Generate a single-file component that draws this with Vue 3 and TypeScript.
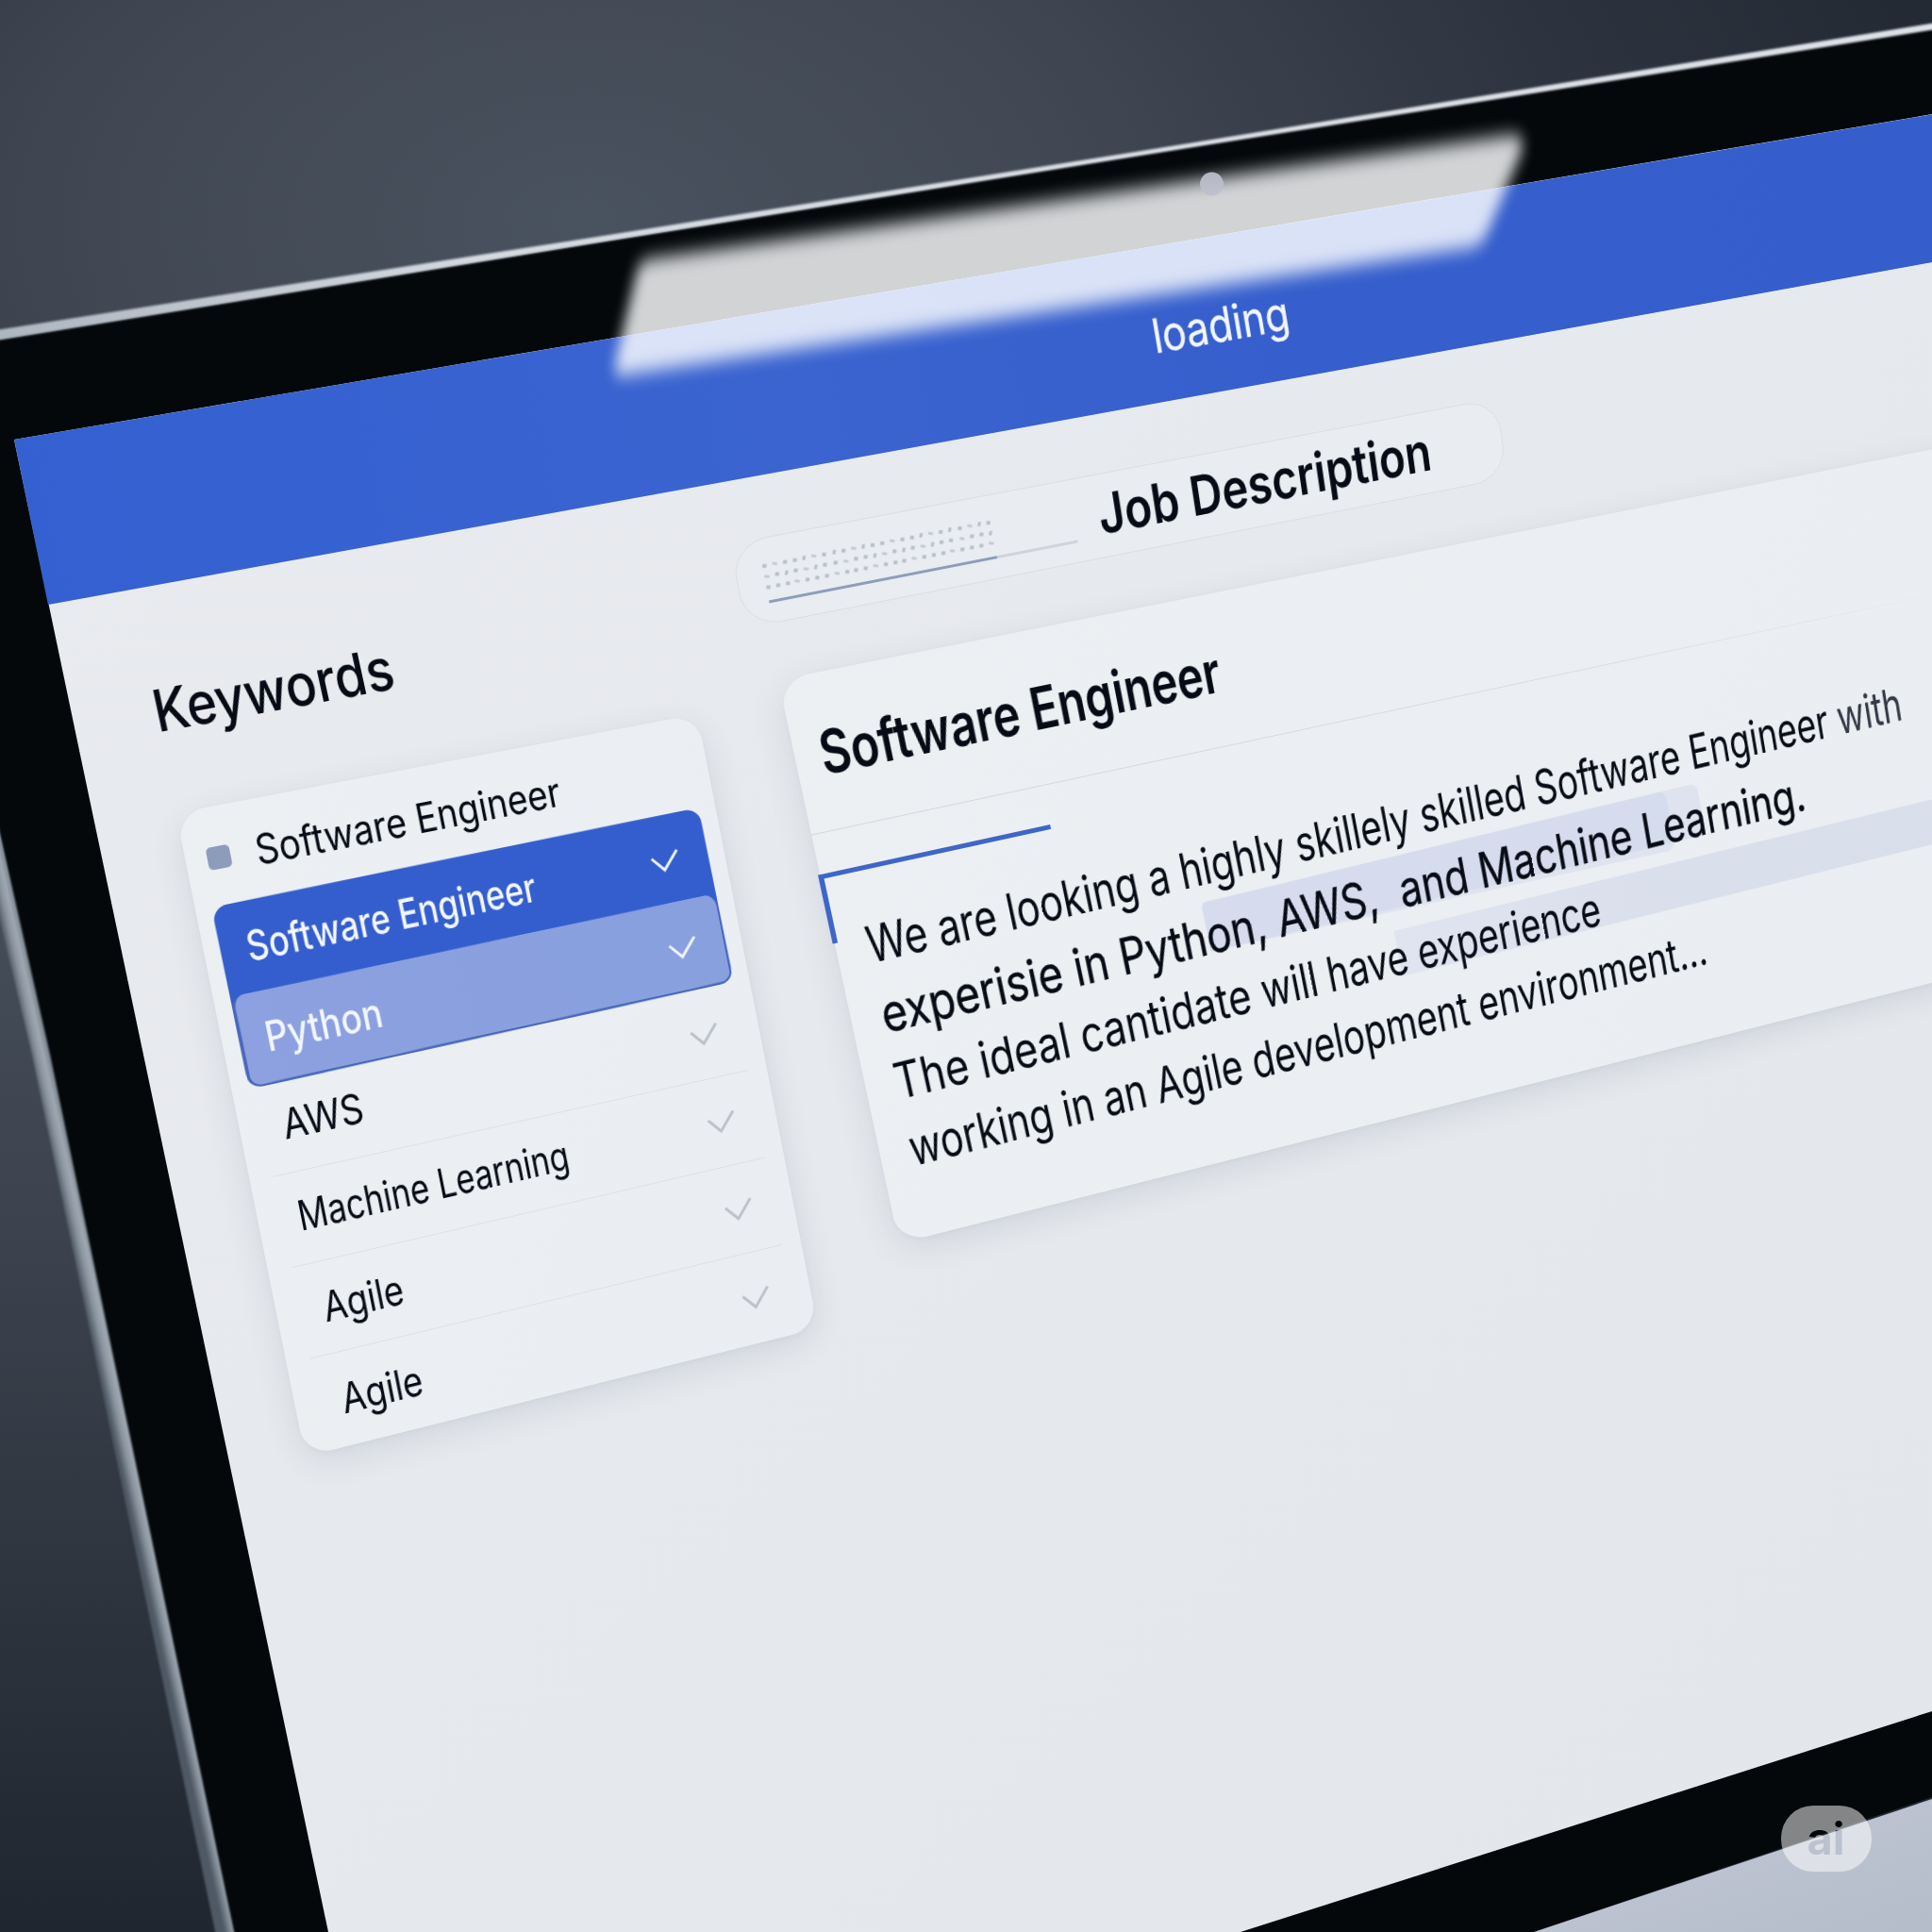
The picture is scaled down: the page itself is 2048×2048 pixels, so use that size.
<script setup lang="ts">
type Point = [number, number]
type Quad = [Point, Point, Point, Point]

interface Panel {
  width: number
  height: number
  corners: Quad
}

// Corners run clockwise from the top left.
const panels: Record<string, Panel> = {
  header: { width: 2114, height: 179, corners: [[15, 466], [2100, 112.5], [2122, 264.5], [51, 641]] },
  pill: { width: 826, height: 92, corners: [[773.5, 576.5], [1587, 421.5], [1598, 507], [790.5, 666.5]] },
  heading: { width: 260, height: 70, corners: [[155.5, 720.6], [410.5, 673.5], [425.5, 742], [170.2, 789]] },
  keywords: { width: 562, height: 690, corners: [[186.5, 862], [739, 757], [867, 1408], [323.5, 1544]] },
  job: { width: 1400, height: 610, corners: [[825, 721], [2200, 446], [2273, 985], [953, 1318]] },
}

// Maps a flat box onto four points of the scene.
function project({ width, height, corners }: Panel) {
  const [[x0, y0], [x1, y1], [x2, y2], [x3, y3]] = corners
  const dx1 = x1 - x2, dx2 = x3 - x2, sx = x0 - x1 + x2 - x3
  const dy1 = y1 - y2, dy2 = y3 - y2, sy = y0 - y1 + y2 - y3
  const det = dx1 * dy2 - dx2 * dy1
  const g = (sx * dy2 - dx2 * sy) / det
  const h = (dx1 * sy - sx * dy1) / det
  const m = [
    (x1 - x0 + g * x1) / width, (y1 - y0 + g * y1) / width, 0, g / width,
    (x3 - x0 + h * x3) / height, (y3 - y0 + h * y3) / height, 0, h / height,
    0, 0, 1, 0,
    x0, y0, 0, 1,
  ]
  return { width: `${width}px`, height: `${height}px`, transform: `matrix3d(${m.join(',')})` }
}

// Condenses a label to the given width, in layout as well as on screen.
const vFit = {
  mounted(el: HTMLElement, { value }: { value: number }) {
    const natural = el.getBoundingClientRect().width && el.offsetWidth
    el.style.transform = `scaleX(${value / natural})`
    el.style.marginRight = `${value - natural}px`
  },
}

const selected = [
  { label: 'Software Engineer', width: 309, tone: 'solid' },
  { label: 'Python', width: 123, tone: 'tint' },
]
const rest = [
  { label: 'AWS', width: 84 },
  { label: 'Machine Learning', width: 290 },
  { label: 'Agile', width: 84 },
  { label: 'Agile', width: 85 },
]
const dots = Array.from({ length: 24 }, (_, i) => i)
</script>

<template>
  <main class="scene">
    <svg class="device" viewBox="0 0 2048 2048" aria-hidden="true">
      <defs>
        <radialGradient id="wall" gradientUnits="userSpaceOnUse" cx="620" cy="230" r="1500" gradientTransform="translate(0 90) scale(1 .62)">
          <stop offset="0" stop-color="#49525f" />
          <stop offset=".35" stop-color="#414853" />
          <stop offset=".7" stop-color="#2d343f" />
          <stop offset="1" stop-color="#222933" />
        </radialGradient>
        <linearGradient id="side" x1="0" y1="0" x2="0" y2="1">
          <stop offset="0" stop-color="#47505c" />
          <stop offset=".4" stop-color="#3b424d" />
          <stop offset="1" stop-color="#20262f" />
        </linearGradient>
        <linearGradient id="rimTop" x1="0" y1="0" x2="1" y2="0">
          <stop offset="0" stop-color="#adb6bf" />
          <stop offset=".25" stop-color="#d5d9e0" />
          <stop offset="1" stop-color="#dde1e7" />
        </linearGradient>
        <linearGradient id="rimSide" gradientUnits="userSpaceOnUse" x1="116" y1="1500" x2="134" y2="1496">
          <stop offset="0" stop-color="#4f5965" />
          <stop offset=".45" stop-color="#8a949f" />
          <stop offset=".8" stop-color="#a0a9b2" />
          <stop offset="1" stop-color="#858f99" />
        </linearGradient>
        <linearGradient id="page" x1="0" y1="0" x2="1" y2="1">
          <stop offset="0" stop-color="#e9ebef" />
          <stop offset=".5" stop-color="#e6e9ed" />
          <stop offset="1" stop-color="#e3e6ea" />
        </linearGradient>
        <linearGradient id="desk" x1="0" y1="0" x2="1" y2="1">
          <stop offset="0" stop-color="#c3c8d5" />
          <stop offset="1" stop-color="#b5bdca" />
        </linearGradient>
        <filter id="soft" x="-5%" y="-5%" width="110%" height="110%"><feGaussianBlur stdDeviation="1" /></filter>
      </defs>
      <rect width="2048" height="2048" fill="url(#wall)" />
      <rect y="850" width="300" height="1198" fill="url(#side)" />
      <path d="M0 360 2060 26V1901L1626 2048H248L0 884Z" fill="#04080b" />
      <path d="M-5 350 620 253 1200 161.500 2053 24V31L1200 166.500 620 259.500-5 361Z" fill="url(#rimTop)" filter="url(#soft)" />
      <path d="M-5 862 53 1118 249 2052H229L34 1118-5 955Z" fill="url(#rimSide)" filter="url(#soft)" />
      <path d="M1626 2048 2048 1907V2048Z" fill="url(#desk)" />
      <path d="M15 466 2048 121V1814L1315 2048H348L85 800Z" fill="url(#page)" />
    </svg>

    <header class="panel bar" :style="project(panels.header)">
      <span v-fit="151" class="label">loading</span>
    </header>

    <section class="panel pill" :style="project(panels.pill)">
      <div class="progress">
        <div v-for="row in 3" :key="row" class="dots">
          <i v-for="d in dots" :key="d" :class="{ tall: (d * row) % 3 === 1, flat: (d + row) % 4 === 2 }" />
        </div>
        <div class="track"><div class="done" /></div>
      </div>
      <h2 v-fit="367" class="label">Job Description</h2>
    </section>

    <div class="panel heading" :style="project(panels.heading)">
      <h2 v-fit="258" class="label">Keywords</h2>
    </div>

    <aside class="panel card keywords" :style="project(panels.keywords)">
      <div class="lead">
        <span class="swatch" />
        <span v-fit="326" class="label">Software Engineer</span>
      </div>
      <div class="selected">
        <div v-for="item in selected" :key="item.label" class="item" :class="item.tone">
          <span v-fit="item.width" class="label">{{ item.label }}</span>
          <svg class="check" viewBox="0 0 31 21"><path d="M1 5 13 19.500 30 .5" /></svg>
        </div>
      </div>
      <ul class="rest">
        <li v-for="(item, i) in rest" :key="i" class="item">
          <span v-fit="item.width" class="label">{{ item.label }}</span>
          <svg class="check" viewBox="0 0 31 21"><path d="M1 5 13 19.500 30 .5" /></svg>
        </li>
      </ul>
    </aside>

    <article class="panel card job" :style="project(panels.job)">
      <header class="title">
        <h1 v-fit="400" class="label">Software Engineer</h1>
      </header>
      <div class="focus" />
      <div class="body">
        <span class="mark first" />
        <span class="mark first inner" />
        <span class="mark second" />
        <p class="opening"><span v-fit="438" class="label">We are looking a highly </span><span v-fit="682" class="label">skillely skilled Software Engineer <em>with</em></span></p>
        <p class="strong"><span v-fit="994" class="label">experisie in Python, AWS,&nbsp; and Machine Learning.</span></p>
        <p><span v-fit="377" class="label">The ideal cantidate </span><span v-fit="371" class="label">will have experience</span></p>
        <p><span v-fit="252" class="label">working in an </span><span v-fit="605" class="label">Agile development environment...</span></p>
      </div>
    </article>

    <svg class="overlay" viewBox="0 0 2048 2048" aria-label="ai">
      <defs>
        <filter id="glow" x="-10%" y="-20%" width="120%" height="140%"><feGaussianBlur stdDeviation="6.500 9.500" /></filter>
        <mask id="cut">
          <rect x="1880" y="1900" width="120" height="100" fill="#fff" />
          <text x="1935.500" y="1966" text-anchor="middle" class="badge">ai</text>
        </mask>
      </defs>
      <path d="M690 274 1596 144Q1618 141 1614 158L1576 248Q1570 261 1556 263L664 397Q648 400 652 386L675 288Q678 276 690 274Z" fill="#fcfdff" opacity=".83" filter="url(#glow)" />
      <circle cx="1284.500" cy="195" r="12.500" fill="#bcbfcc" opacity=".93" />
      <rect x="1888" y="1914" width="96" height="70" rx="34" fill="#fff" opacity=".51" mask="url(#cut)" />
    </svg>
  </main>
</template>

<style>
body {
  margin: 0;
  overflow: hidden;
}
</style>

<style scoped>
.scene {
  position: relative;
  width: 2048px;
  height: 2048px;
  overflow: hidden;
  background: #2c333e;
  color: #070b15;
  font-family: Inter, "Liberation Sans", sans-serif;
}
.device,
.overlay,
.panel {
  position: absolute;
  top: 0;
  left: 0;
}
.device,
.overlay {
  width: 2048px;
  height: 2048px;
}
.panel {
  box-sizing: border-box;
  outline: 1px solid transparent;
  transform-origin: 0 0;
}
.label {
  display: inline-block;
  flex: none;
  margin: 0;
  white-space: pre;
  transform-origin: 0 50%;
}
h1, h2, p, ul {
  margin: 0;
  padding: 0;
}

.bar {
  display: flex;
  align-items: center;
  padding: 25px 0 0 1128px;
  background: linear-gradient(90deg, #3460d1, #3b64d0 35%, #365fcd 60%, #355dcc);
  color: #f2f6ff;
  font-size: 55px;
  -webkit-text-stroke: .5px;
}

.pill {
  display: flex;
  align-items: center;
  border: 1.5px solid #dadde2;
  border-radius: 38px;
  background: #e9ecf0;
}
.pill h2 {
  margin-top: -5px;
  font-size: 60px;
  font-weight: 600;
}
.progress {
  flex: none;
  width: 323px;
  margin: 2px 26px 0 27px;
}
.dots {
  display: flex;
  justify-content: space-between;
  align-items: center;
  width: 236px;
  height: 11.5px;
  margin-left: 0;
}
.dots i {
  width: 4px;
  height: 4px;
  background: #b9bfcc;
  transform: rotate(20deg);
}
.dots .tall {
  width: 3px;
  height: 5px;
}
.dots .flat {
  width: 5px;
  height: 3px;
  background: #c6cad5;
}
.track {
  height: 3.5px;
  margin-top: 8px;
  background: #cfd3da;
}
.done {
  width: 237px;
  height: 100%;
  background: #8e9dba;
}

.heading h2 {
  font-size: 62px;
  line-height: 70px;
  font-weight: 500;
}

.card {
  display: flex;
  flex-direction: column;
  background: linear-gradient(120deg, #edf0f3, #eaedf1);
  box-shadow: 0 10px 34px rgba(60, 72, 110, .12), 0 2px 8px rgba(60, 72, 110, .04);
}

.keywords {
  border-radius: 30px;
  font-size: 44px;
}
.lead {
  display: flex;
  align-items: center;
  height: 104px;
  padding: 4px 0 0 22px;
  box-sizing: border-box;
}
.swatch {
  width: 24px;
  height: 24px;
  margin-right: 26px;
  border-radius: 5px;
  background: #8e9cbb;
}
.selected {
  margin: 0 18.5px 0 17px;
  border-radius: 16px;
  background: #345ecd;
  color: #f2f6ff;
  font-weight: 500;
  transform: rotate(-.35deg);
  transform-origin: 0 50%;
}
.item {
  display: flex;
  align-items: center;
  justify-content: space-between;
  box-sizing: border-box;
  height: 98px;
}
.solid {
  height: 96px;
  padding: 0 31.5px 0 27px;
}
.tint {
  height: 99px;
  padding: 0 29.5px 0 24px;
  border: solid #4867b8;
  border-width: 0 2px 2px 3px;
  border-radius: 14px;
  background: linear-gradient(90deg, #8da0df, #88a0de);
  background-clip: padding-box;
}
.item .label {
  width: max-content;
}
.check {
  flex: none;
  width: 31px;
  height: 21px;
  overflow: visible;
  fill: none;
  stroke: #eef3fe;
  stroke-width: 3;
}
.selected .check {
  margin-top: 5px;
}
.rest {
  list-style: none;
  margin: -2px 21px 0 24px;
}
.rest .item {
  padding: 0 24px 0 20px;
  border-bottom: 1.5px solid #dde0e6;
}
.rest .label {
  margin-top: -5px;
}
.rest .item:nth-child(2) {
  padding-left: 17px;
}
.rest .item:nth-child(n + 3) {
  padding-left: 24px;
}
.rest .item:nth-child(n + 3) .label {
  margin-top: -1px;
}
.rest .item:last-child {
  border: 0;
}
.rest .check {
  margin-top: 2px;
  stroke: #bcc0cb;
}

.job {
  border-radius: 30px;
}
.title {
  display: flex;
  align-items: center;
  box-sizing: border-box;
  height: 164px;
  padding: 2px 0 0 24px;
  border-bottom: 1.5px solid;
  border-image: linear-gradient(90deg, #d3d6db, #d9dce1 60%, #e9ecf1 88%) 1;
}
.title h1 {
  font-size: 62px;
  font-weight: 600;
}
.focus {
  box-sizing: border-box;
  width: 230px;
  height: 74px;
  margin: 42px 0 -26px -2px;
  border: solid #3e66c8;
  border-width: 5px 0 0 5px;
}
.body {
  position: relative;
  transform: rotate(-.55deg);
  transform-origin: 33px 55px;
}
.body p {
  position: relative;
  height: 74px;
  padding-left: 27px;
  font-size: 54px;
  line-height: 74px;
  white-space: nowrap;
}
.body .opening {
  top: -1px;
  padding-left: 30px;
}
.body em {
  font-style: normal;
  color: #343945;
}
.body .strong {
  padding-left: 29px;
  font-size: 55px;
  -webkit-text-stroke: .4px;
}
.mark {
  position: absolute;
}
.first {
  top: 71px;
  left: 361px;
  width: 544px;
  height: 69px;
  border-radius: 10px;
  background: rgba(196, 206, 234, .32);
  clip-path: polygon(0 4%, 100% 0, 100% 88%, 0 83%);
}
.inner {
  width: 508px;
  clip-path: polygon(0 4%, 100% 0, 100% 100%, 0 83%);
}
.second {
  top: 154px;
  left: 552px;
  width: 848px;
  height: 52px;
  background: linear-gradient(90deg, #e0e4f1, #dadfec 35%, #d8deea);
}
.badge {
  font-family: Inter, sans-serif;
  font-size: 47px;
  font-weight: 700;
  fill: #000;
}
</style>
